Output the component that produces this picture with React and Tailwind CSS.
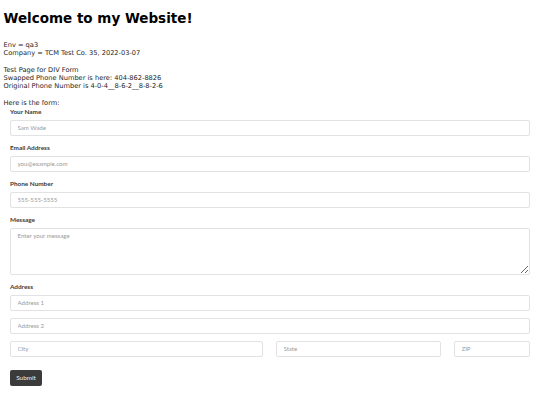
export default function App() {
  const inputCls =
    "block w-full h-[16px] border border-[#e2e2e2] rounded-[2px] bg-white pl-[6.5px] text-[6.1px] text-[#495057] outline-none placeholder:text-[#9a9a9a] font-['Lato',sans-serif]";
  const labelCls =
    "block h-[8px] leading-[8px] mb-[4px] text-[6.4px] font-bold text-[#3a3a3a] font-['Lato',sans-serif]";
  return (
    <div className="w-[540px] h-[405px] bg-white text-[#1c1c1c] font-['DejaVu_Sans',sans-serif] text-[6.65px] leading-[8px] pl-[3.5px]">
      <h1 className="pt-[10px] text-[13.5px] leading-[16px] font-bold text-black">Welcome to my Website!</h1>
      <div className="mt-[15.2px]">
        <div>Env = qa3</div>
        <div>Company = TCM Test Co. 35, 2022-03-07</div>
      </div>
      <div className="mt-[9px]">
        <div>Test Page for DIV Form</div>
        <div>Swapped Phone Number is here: 404-862-8826</div>
        <div>Original Phone Number is 4-0-4__8-6-2__8-8-2-6</div>
      </div>
      <div className="mt-[9px]">Here is the form:</div>
      <form className="ml-[6.5px] mr-[10px] mt-[0.8px]" onSubmit={(e) => e.preventDefault()}>
        <div className="mb-[8px]">
          <label className={labelCls}>Your Name</label>
          <input className={inputCls} placeholder="Sam Wade" />
        </div>
        <div className="mb-[8px]">
          <label className={labelCls}>Email Address</label>
          <input className={inputCls} placeholder="you@example.com" />
        </div>
        <div className="mb-[8px]">
          <label className={labelCls}>Phone Number</label>
          <input className={inputCls} placeholder="555-555-5555" />
        </div>
        <div className="mb-[8px]">
          <label className={labelCls}>Message</label>
          <textarea
            className="block w-full h-[47px] border border-[#e2e2e2] rounded-[2px] bg-white pl-[6.5px] pt-[3px] text-[6.1px] leading-[8px] text-[#495057] outline-none placeholder:text-[#9a9a9a] font-['Lato',sans-serif]"
            placeholder="Enter your message"
          />
        </div>
        <div>
          <label className={labelCls}>Address</label>
          <input className={inputCls} placeholder="Address 1" />
          <input className={inputCls + " mt-[7px]"} placeholder="Address 2" />
          <div className="mt-[7px] flex gap-[13px]">
            <input className={inputCls + " !w-[253px] shrink-0"} placeholder="City" />
            <input className={inputCls + " !w-[165px] shrink-0"} placeholder="State" />
            <input className={inputCls + " !w-auto flex-1 min-w-0"} placeholder="ZIP" />
          </div>
        </div>
        <button
          type="submit"
          className="mt-[13px] block w-[32px] h-[16px] bg-[#3b3b3b] text-[#f0f0f0] rounded-[2px] text-[6.4px] font-['Lato',sans-serif]"
        >
          Submit
        </button>
      </form>
    </div>
  );
}
